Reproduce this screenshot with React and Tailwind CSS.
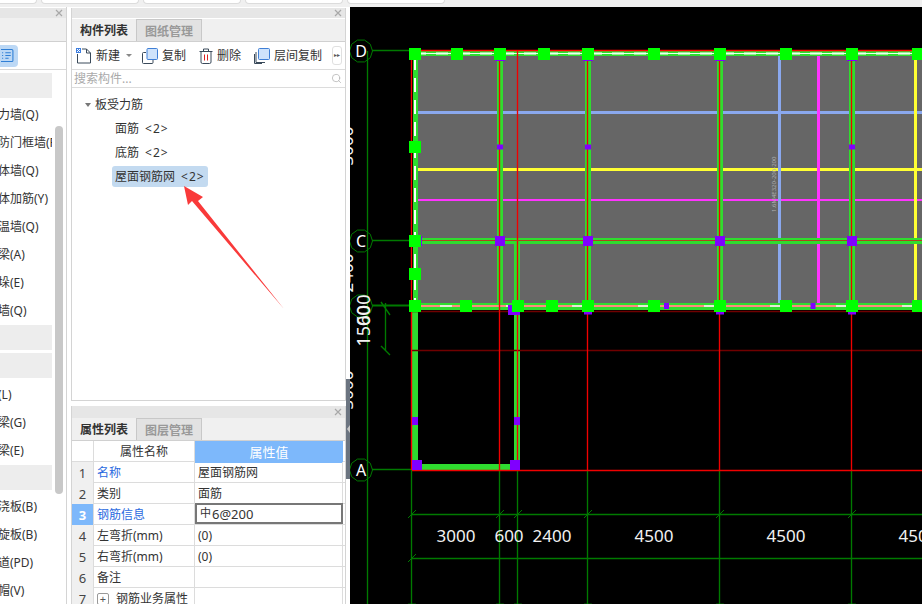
import { Search } from 'lucide-react';

const GREEN = '#007a00';
const WALL = '#2fdc2f';
const PURPLE = '#8000ff';
const LIME = '#00ff00';
const THIN = 1.35;

const axisX = [412, 500, 518, 588, 720, 852];
const wallX = [500, 588, 720, 852];
const topSquares = [415, 457, 500, 544, 588, 654, 720, 786, 852, 918];
const bottomSquares = [415, 466, 518, 552, 588, 654, 720, 786, 852, 918];

const Close = () => (
  <svg width="8" height="8" viewBox="0 0 8 8" className="block">
    <path d="M1 1l6 6M7 1l-6 6" stroke="#a8a8a8" strokeWidth="1.2" />
  </svg>
);

const PanelHeader = ({ className = 'h-[10px]' }) => (
  <div className={`bg-[#e6e6e6] flex items-center justify-end pr-[3px] ${className}`}>
    <Close />
  </div>
);

const Tabs = ({ active, other }) => (
  <div className="h-[23px] flex bg-[#f0f0f0] border-b border-[#d0d0d0] font-bold text-xs leading-[24px]">
    <div className="w-[65px] text-center text-[#333] border-r border-[#c8c8c8]">{active}</div>
    <div className="w-[65px] text-center text-[#999] bg-[#e2e2e2] border-r border-t border-[#c8c8c8]">{other}</div>
  </div>
);

const LeftItem = ({ text }) => (
  <div className="h-[28px] leading-[30px] -ml-[14px] whitespace-nowrap text-xs text-[#333]">{text}</div>
);

const LeftGroup = ({ className }) => <div className={`h-[25px] bg-[#ededed] ${className}`} />;

const LeftPanel = () => (
  <div className="w-[67px] shrink-0 border-r border-[#d4d4d4] flex flex-col pt-px">
    <PanelHeader />
    <div className="h-[24px] bg-[#f0f0f0] border-b border-[#d0d0d0]" />
    <div className="h-[28px] border-b border-[#d8d8d8] flex items-center">
      <div className="w-[18px] h-[22px] bg-[#bcd8f5] rounded-r-[4px] flex items-center justify-end pr-[4px]">
        <svg width="13" height="13" viewBox="0 0 12 12" fill="none" stroke="#2f7fd6">
          <rect x="-3" y="0.5" width="14" height="11" rx="1" />
          <path d="M1 3.5h1M4 3.5h5M1 6h1M4 6h5M1 8.5h1M4 8.5h3" />
        </svg>
      </div>
    </div>
    <div className="flex flex-1 min-h-0">
      <div className="w-[52px] overflow-hidden">
        <LeftGroup className="mt-[3px] mb-[2px]" />
        {['剪力墙(Q)', '人防门框墙(RF)', '砌体墙(Q)', '砌体加筋(Y)', '保温墙(Q)', '暗梁(A)', '墙垛(E)', '幕墙(Q)'].map(t => (
          <LeftItem key={t} text={t} />
        ))}
        <LeftGroup className="mt-px" />
        <LeftGroup className="mt-[3px] mb-[2px]" />
        {['梁(L)', '连梁(G)', '圈梁(E)'].map(t => (
          <LeftItem key={t} text={t} />
        ))}
        <LeftGroup className="mt-px mb-[2px]" />
        {['现浇板(B)', '螺旋板(B)', '通道(PD)', '柱帽(V)'].map(t => (
          <LeftItem key={t} text={t} />
        ))}
      </div>
      <div className="ml-[3px] w-[8px] h-[368px] mt-[56px] bg-[#c8c8c8] rounded-[4px]" />
    </div>
  </div>
);

const Tool = ({ icon, label, className }) => (
  <div className={`flex items-center gap-[4px] text-xs text-[#333] whitespace-nowrap shrink-0 ${className}`}>
    {icon}
    <span>{label}</span>
  </div>
);

const NewIcon = () => (
  <svg width="16" height="16" viewBox="0 0 16 16" fill="none" className="shrink-0">
    <path d="M1.5 6v9h13V5L10.5 1H6" stroke="#3a4a5a" />
    <path d="M10.5 1v4h4" stroke="#3a4a5a" />
    <rect x="0" y="0" width="5" height="5" fill="#3f7fe0" />
    <path d="M1 1h1v1H1zM3 1h1v1H3zM2 2h1v1H2zM1 3h1v1H1zM3 3h1v1H3z" fill="#fff" />
  </svg>
);

const CopyIcon = () => (
  <svg width="16" height="16" viewBox="0 0 16 16" fill="none" className="shrink-0">
    <path d="M4 4.5H1.5a1 1 0 0 0-1 1v9a1 1 0 0 0 1 1H10a1 1 0 0 0 1-1V12" stroke="#3a4a5a" />
    <rect x="5" y="0.5" width="10.5" height="11" rx="1" fill="#cfe3fb" stroke="#3f7fd6" />
  </svg>
);

const TrashIcon = () => (
  <svg width="14" height="16" viewBox="0 0 14 16" fill="none" className="shrink-0">
    <path d="M0.5 3.5h13M4.5 3V1h5v2" stroke="#3a4a5a" />
    <path d="M2 3.5v10.500a1.500 1.500 0 0 0 1.500 1.500h7a1.500 1.500 0 0 0 1.500-1.500V3.500" stroke="#3a4a5a" />
    <path d="M5.500 6.500v6M8.500 6.500v6" stroke="#e02020" />
  </svg>
);

const LayerIcon = () => (
  <svg width="16" height="16" viewBox="0 0 16 16" fill="none" className="shrink-0">
    <path d="M2 4v10.500h9M0.500 6v9.500H8" stroke="#3a4a5a" />
    <rect x="4.500" y="0.500" width="11" height="11" rx="1" fill="#cfe3fb" stroke="#3f7fd6" />
  </svg>
);

const ComponentList = () => (
  <div className="flex-1 min-h-0 border-x border-b border-[#d4d4d4] flex flex-col">
    <PanelHeader />
    <div className="mt-px">
      <Tabs active="构件列表" other="图纸管理" />
    </div>
    <div className="h-[28px] border-b border-[#dcdcdc] flex items-center pl-[4px]">
      <Tool icon={<NewIcon />} label="新建" />
      <div className="ml-[6px] w-0 h-0 border-x-[3px] border-x-transparent border-t-[3px] border-t-[#888]" />
      <Tool icon={<CopyIcon />} label="复制" className="ml-[10px]" />
      <Tool icon={<TrashIcon />} label="删除" className="ml-[13px]" />
      <Tool icon={<LayerIcon />} label="层间复制" className="ml-[13px]" />
      <div className="ml-[10px] w-[10px] h-[19px] shrink-0 border border-[#e0e0e0] rounded-[3px] text-[6px] leading-[17px] text-center text-[#555]">▸▸</div>
    </div>
    <div className="h-[18px] border-b border-[#dcdcdc] flex items-center justify-between pl-[2px] pr-[3px] text-xs text-[#aaa]">
      <span>搜索构件...</span>
      <Search size={11} strokeWidth={1.5} color="#aaa" />
    </div>
    <div className="pt-[4px] text-xs text-[#333]">
      <div className="h-[21px] mt-[2px] flex items-center pl-[13px]">
        <div className="w-0 h-0 border-x-[3px] border-x-transparent border-t-[4px] border-t-[#777]" />
        <span className="ml-[4px]">板受力筋</span>
      </div>
      <div className="h-[21px] mt-[3px] flex items-center pl-[43px]">面筋<span className="ml-[6px] tracking-[1px]">&lt;2&gt;</span></div>
      <div className="h-[21px] mt-[3px] flex items-center pl-[43px]">底筋<span className="ml-[6px] tracking-[1px]">&lt;2&gt;</span></div>
      <div className="h-[21px] mt-[3px] ml-[40px] w-[96px] pl-[3px] flex items-center bg-[#c3daf0] rounded-[3px]">屋面钢筋网<span className="ml-[6px] tracking-[1px]">&lt;2&gt;</span></div>
    </div>
  </div>
);

const rows = [
  { n: 1, name: '名称', value: '屋面钢筋网', link: true },
  { n: 2, name: '类别', value: '面筋' },
  { n: 3, name: '钢筋信息', link: true, active: true },
  { n: 4, name: '左弯折(mm)', value: '(0)' },
  { n: 5, name: '右弯折(mm)', value: '(0)' },
  { n: 6, name: '备注', value: '' },
];

const Properties = () => (
  <div className="h-[198px] mt-[5px] shrink-0 border-l border-r border-[#d4d4d4] flex flex-col overflow-hidden">
    <PanelHeader className="h-[12px] shrink-0" />
    <Tabs active="属性列表" other="图层管理" />
    <div className="text-xs text-[#333]">
      <div className="grid grid-cols-[22px_101px_148px] h-[21px] border-b border-[#dcdcdc] leading-[22px] text-center">
        <div className="border-r border-[#dcdcdc]" />
        <div className="border-r border-[#dcdcdc]">属性名称</div>
        <div className="bg-[#7db8fb] text-white text-[13px]">属性值</div>
      </div>
      {rows.map(r => (
        <div key={r.n} className="grid grid-cols-[22px_101px_148px] h-[21px] border-b border-[#dcdcdc] leading-[22px]">
          <div className={`border-r border-[#dcdcdc] text-center text-[13px] ${r.active ? 'bg-[#7db8fb] text-white font-bold' : 'bg-[#f0f0f0] text-[#444]'}`}>{r.n}</div>
          <div className={`border-r border-[#dcdcdc] pl-[3px] ${r.link ? 'text-[#2a6ae0]' : ''}`}>{r.name}</div>
          {r.active ? (
            <div className="border-2 border-[#777] pl-[3px] h-[21px] text-[13px] leading-[15px] -mt-px">
              <span className="text-[11px] align-[2px] mr-px">中</span>6@200
            </div>
          ) : (
            <div className="border-r border-[#dcdcdc] pl-[3px]">{r.value}</div>
          )}
        </div>
      ))}
      <div className="grid grid-cols-[22px_101px_148px] h-[21px] leading-[22px]">
        <div className="border-r border-[#dcdcdc] bg-[#f0f0f0] text-center text-[13px] text-[#444]">7</div>
        <div className="border-r border-[#dcdcdc] pl-[3px] flex items-center">
          <div className="w-[12px] h-[12px] border border-[#999] rounded-[2px] text-[11px] leading-[9px] text-center text-[#555]">+</div>
          <span className="ml-[7px] whitespace-nowrap">钢筋业务属性</span>
        </div>
        <div className="border-r border-[#dcdcdc]" />
      </div>
    </div>
  </div>
);

// axis bubble, drawn as a rough polygon like the CAD view does
const Bubble = ({ x, y, label }) => {
  const pts = Array.from({ length: 10 }, (_, i) => {
    const a = (i * Math.PI) / 5;
    return `${x + 11.5 * Math.cos(a)},${y + 11.5 * Math.sin(a)}`;
  }).join(' ');
  return (
    <g>
      <polygon points={pts} fill="none" stroke={GREEN} />
      {label && <text x={x} y={y + 6} fill="#fff" fontSize="16" textAnchor="middle">{label}</text>}
    </g>
  );
};

const Square = ({ x, y }) => <rect x={x - 6} y={y - 6} width="12" height="12" fill={LIME} />;
const Purple = ({ x, y, w, h }) => <rect x={x - w / 2} y={y - h / 2} width={w} height={h} fill={PURPLE} />;
const Tick = ({ x, y }) => <path d={`M${x - 4} ${y + 4}L${x + 4} ${y - 4}`} stroke={GREEN} />;
const Dim = ({ x, label }) => <text x={x} y="542" fill="#f2f2f2" fontSize="17" textAnchor="middle">{label}</text>;
const SideDim = ({ y, label }) => (
  <text transform={`translate(369.500 ${y}) rotate(-90)`} fill="#f2f2f2" fontSize="18" textAnchor="middle">{label}</text>
);
const ClippedDim = ({ y, label }) => (
  <text transform={`translate(352.500 ${y}) rotate(-90)`} fill="#f2f2f2" fontSize="17" textAnchor="middle">{label}</text>
);

const Drawing = () => (
  <svg width="572" height="597" viewBox="350 7 572 597" className="block shrink-0">
    <rect x="350" y="7" width="572" height="597" fill="#000" />

    {/* slab */}
    <rect x="414" y="54" width="508" height="254" fill="#666" />

    {/* axis lines */}
    <path d="M367.500 51V604" stroke={GREEN} strokeWidth={THIN} />
    {[50.5, 240.5, 305.5, 469.5].map(y => (
      <path key={y} d={`M372 ${y}H412`} stroke={GREEN} strokeWidth={y === 305.5 ? 2 : THIN} />
    ))}
    {axisX.map(x => (
      <path key={x} d={`M${x - 0.5} 470V604`} stroke={GREEN} strokeWidth={THIN} />
    ))}
    <path d="M412 514.500H922M412 558.500H922" stroke={GREEN} strokeWidth={THIN} />
    <path d="M385.500 303V351M381 302L390 315M381 346L390 355" stroke={GREEN} strokeWidth={THIN} />
    {axisX.map(x => (
      <Tick key={x} x={x} y={514} />
    ))}
    <Tick x={412} y={558} />

    {/* rebar lines */}
    <rect x="414" y="111" width="508" height="3" fill="#8aa8ee" />
    <rect x="414" y="168" width="508" height="3" fill="#ffff33" />
    <rect x="414" y="199" width="508" height="2" fill="#ff33ff" />
    <rect x="778" y="54" width="3" height="252" fill="#8aa8ee" />
    <rect x="817" y="55" width="3" height="250" fill="#ff33ff" />
    <rect x="914" y="55" width="3" height="249" fill="#ffff33" />

    {/* walls */}
    {wallX.map(x => (
      <rect key={x} x={x - 3} y="54" width="6" height="252" fill={WALL} />
    ))}
    <rect x="414" y="238" width="508" height="6" fill={WALL} />
    <rect x="514" y="241" width="6" height="229" fill={WALL} />
    <rect x="413" y="51" width="5" height="257" fill={WALL} />
    <rect x="412" y="306" width="6" height="164" fill={WALL} />
    <rect x="417" y="464" width="98" height="6" fill={WALL} />
    <rect x="414" y="51" width="508" height="5" fill={WALL} />
    <path d="M414 53.500H922" stroke="#fff" strokeWidth="2" strokeDasharray="12 10" />
    <path d="M414 53.500H922" stroke="#f0fff0" />
    <path d="M415 56V304" stroke="#fff" strokeWidth="2" strokeDasharray="14 8" />
    <rect x="414" y="303" width="508" height="7" fill={WALL} />
    <path d="M414 306H922" stroke="#ff8a80" strokeWidth="2" />
    <path d="M420 306H922" stroke="#e8e8d8" strokeWidth="2" strokeDasharray="12 54" strokeDashoffset="-20" />

    {/* red and dark red grid lines */}
    <path d="M411 50.500H922" stroke="#f00" strokeWidth={THIN} />
    <path d="M412 311.500H922M412 350.500H922" stroke="#700000" strokeWidth={THIN} />
    <path d="M412 470.500H922" stroke="#f00000" strokeWidth={THIN} />
    <path d="M411.500 51V470" stroke="#f00" strokeWidth={THIN} />
    {[500, 518, 588, 720, 852].map(x => (
      <path key={x} d={`M${x - 0.5} 51V470`} stroke="#f00000" strokeWidth={THIN} />
    ))}
    <path d="M414 240.500H922" stroke="#b04020" />

    {/* columns */}
    {[500, 588, 852].map(x => (
      <Purple key={x} x={x} y={147} w={6} h={5} />
    ))}
    {[417, 500, 588, 720, 852].map(x => (
      <Purple key={x} x={x} y={241} w={10} h={10} />
    ))}
    {[500, 588, 720, 852].map(x => (
      <Purple key={x} x={x} y={60.500} w={10} h={1} />
    ))}
    <Purple x={514} y={310} w={12} h={10} />
    {[588, 720, 852].map(x => (
      <Purple key={x} x={x} y={313} w={8} h={3} />
    ))}
    <Purple x={666.500} y={306} w={5} h={6} />
    <Purple x={813} y={306} w={5} h={6} />
    <Purple x={415} y={421} w={6} h={8} />
    <Purple x={517} y={421} w={6} h={8} />
    <Purple x={417} y={465} w={10} h={10} />
    <Purple x={515} y={465} w={10} h={10} />

    {topSquares.map(x => (
      <Square key={x} x={x} y={54} />
    ))}
    <Square x={415} y={147} />
    <Square x={415} y={241} />
    <Square x={415} y={274} />
    {bottomSquares.map(x => (
      <Square key={x} x={x} y={306} />
    ))}

    {/* bubbles */}
    <Bubble x={361} y={51} label="D" />
    <Bubble x={361} y={241} label="C" />
    <Bubble x={361} y={306} />
    <Bubble x={361} y={470} label="A" />
    {axisX.map(x => (
      <Bubble key={x} x={x} y={615} />
    ))}

    {/* dimensions */}
    <Dim x={456} label="3000" />
    <Dim x={509} label="600" />
    <Dim x={552} label="2400" />
    <Dim x={654} label="4500" />
    <Dim x={786} label="4500" />
    <Dim x={918} label="4500" />
    <SideDim y={326} label="1500" />
    <SideDim y={310} label="600" />
    <ClippedDim y={146} label="3000" />
    <ClippedDim y={273} label="2400" />
    <ClippedDim y={390} label="3000" />

    <text transform="translate(776 212) rotate(-90)" fill="#b0b0b0" fontSize="6">1.6M4E320-200-200</text>
  </svg>
);

export default function App() {
  return (
    <div className="relative w-[922px] h-[604px] overflow-hidden bg-white flex flex-col font-['Noto_Sans','Noto_Sans_CJK_SC',sans-serif]">
      {/* window tabs */}
      <div className="h-[7px] shrink-0 bg-[#f0f0f0] flex gap-[4px] -ml-[61px] overflow-visible">
        {[0, 1, 2, 3, 4].map(i => (
          <div key={i} className="w-[98px] h-[4px] shrink-0 bg-white border-x border-b border-[#dcdcdc] rounded-b-[4px]" />
        ))}
      </div>
      <div className="flex flex-1 min-h-0">
        <LeftPanel />
        <div className="w-[4px] shrink-0" />
        <div className="w-[275px] shrink-0 flex flex-col pt-px">
          <ComponentList />
          <Properties />
        </div>
        <div className="w-[4px] shrink-0 flex flex-col">
          <div className="h-[372px]" />
          <div className="h-[100px] bg-[#6b7480] flex items-center justify-center">
            <div className="w-0 h-0 border-y-[4px] border-y-transparent border-r-[3px] border-r-[#c8c8c8]" />
          </div>
        </div>
        <Drawing />
      </div>

      {/* red callout arrow */}
      <svg width="922" height="604" className="absolute inset-0 pointer-events-none">
        <polygon points="184,186 203,197 198,201 284,309 192,201 188,205" fill="#f93a3a" />
      </svg>
    </div>
  );
}
